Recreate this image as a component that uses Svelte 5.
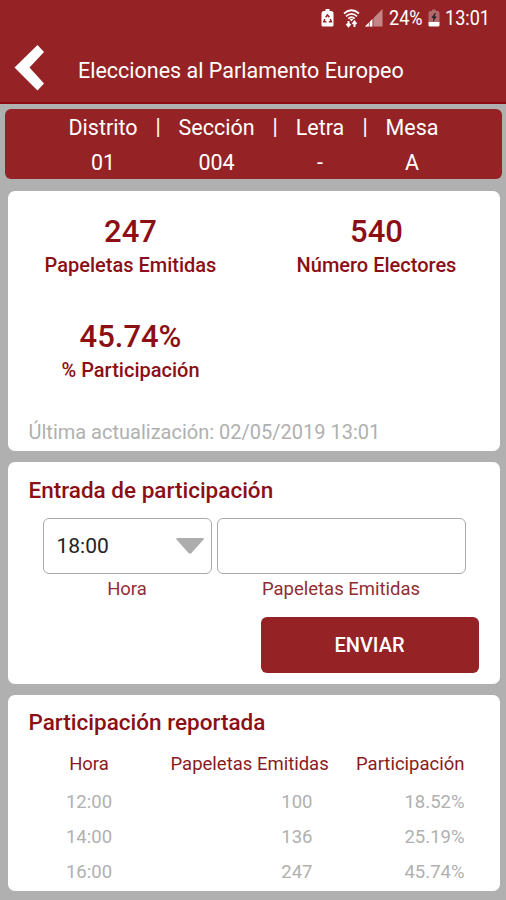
<script>
  const location = [
    { label: 'Distrito', value: '01' },
    { label: 'Sección', value: '004' },
    { label: 'Letra', value: '-' },
    { label: 'Mesa', value: 'A' }
  ];

  const stats = [
    { label: 'Papeletas Emitidas', value: '247' },
    { label: 'Número Electores', value: '540' },
    { label: '% Participación', value: '45.74%' }
  ];

  const reports = [
    { hour: '12:00', ballots: 100, turnout: '18.52%' },
    { hour: '14:00', ballots: 136, turnout: '25.19%' },
    { hour: '16:00', ballots: 247, turnout: '45.74%' }
  ];

  let ballots = $state('');
</script>

<div class="screen">
  <header>
    <div class="status">
      <svg class="recycle" width="13" height="18" viewBox="0 0 13 18">
        <path d="M3 2h1.500V0h4v2H10q2.500 0 2.500 2.500V16q0 1.500-1.500 1.500H2Q.5 17.500.5 16V4.500Q.5 2 3 2z" fill="#fff" />
        <path d="M4.700 8.300 6.500 6l1.800 2.300M9.300 10l1 2.700H7.800M5.400 12.700H2.800L3.900 10" fill="none" stroke="#952326" stroke-width="1.500" />
      </svg>
      <svg class="wifi" width="17" height="19" viewBox="0 0 17 19">
        <path d="M1 4.500q7.500-6.500 15 0M3 7.300q5.500-4.800 11 0M5.300 9.600q3.200-2.800 6.400 0" fill="none" stroke="#fff" stroke-width="1.700" />
        <path d="M8.500 12.500 6.300 9.700h4.400z" fill="#fff" />
        <path d="M5.500 12v5M3.500 14.800l2 2.400 2-2.400M11.500 18v-5M9.500 15l2-2.400 2 2.400" fill="none" stroke="#fff" stroke-width="1.900" />
      </svg>
      <svg class="signal" width="18" height="18" viewBox="0 0 18 18">
        <path d="M17.500 0v17.500H0z" fill="#c58587" />
        <path d="M7.500 10v7.500H0z" fill="#fff" />
        <path d="M4.300 11v7M8 8v10" stroke="#952326" stroke-width=".7" />
      </svg>
      <span class="percent">24%</span>
      <svg class="battery" width="12" height="18" viewBox="0 0 12 18">
        <path d="M2.500 2H4V.5h4V2h1.500Q11.500 2 11.500 4v9H.5V4q0-2 2-2z" fill="#b2686a" />
        <path d="M.5 13h11v3q0 1.500-1.500 1.500H2Q.5 17.500.5 16z" fill="#fff" />
        <path d="M7 4 3.300 9h2.200L4.800 13l4-5.500H6.500L8 4z" fill="#222" />
      </svg>
      <span class="clock">13:01</span>
    </div>
    <div class="title-bar">
      <svg class="back" width="32" height="48" viewBox="0 0 32 48">
        <path d="M23.500 1 30 8 15.500 23.500 30 39.500 23.500 46.500.5 23.500z" fill="#fff" />
      </svg>
      <h1>Elecciones al Parlamento Europeo</h1>
    </div>
  </header>

  <section class="location">
    {#each location as item, i}
      {#if i > 0}<span class="divider">|</span>{/if}
      <div class="place">
        <span>{item.label}</span>
        <span>{item.value}</span>
      </div>
    {/each}
  </section>

  <section class="card summary">
    <div class="stats">
      {#each stats as stat}
        <div class="stat">
          <strong>{stat.value}</strong>
          <span>{stat.label}</span>
        </div>
      {/each}
    </div>
    <p class="updated">Última actualización: 02/05/2019 13:01</p>
  </section>

  <section class="card entry">
    <h2>Entrada de participación</h2>
    <div class="fields">
      <div class="field hour">
        <button class="select" aria-label="Hora">
          <span>18:00</span>
          <svg width="30" height="18" viewBox="0 0 30 18">
            <path d="M2 1h26q1.500 0 .5 1.500L16.500 16q-1.500 1.500-3 0L1.500 2.500Q.5 1 2 1z" fill="#adadad" />
          </svg>
        </button>
        <span class="caption">Hora</span>
      </div>
      <div class="field ballots">
        <input aria-label="Papeletas Emitidas" bind:value={ballots} />
        <span class="caption">Papeletas Emitidas</span>
      </div>
    </div>
    <button class="send">ENVIAR</button>
  </section>

  <section class="card reported">
    <h2>Participación reportada</h2>
    <table>
      <thead>
        <tr><th>Hora</th><th>Papeletas Emitidas</th><th>Participación</th></tr>
      </thead>
      <tbody>
        {#each reports as row}
          <tr><td>{row.hour}</td><td>{row.ballots}</td><td>{row.turnout}</td></tr>
        {/each}
      </tbody>
    </table>
  </section>
</div>

<style>
  :global(body) {
    margin: 0;
    background: #b0b0b0;
  }

  .screen {
    box-sizing: border-box;
    width: 506px;
    height: 900px;
    overflow: hidden;
    background: #b0b0b0;
    font-family: Roboto, 'Liberation Sans', sans-serif;
  }

  header {
    box-sizing: border-box;
    height: 104px;
    background: #952326;
    border-bottom: 2px solid #8a0c10;
    color: #fff;
  }

  .status {
    display: flex;
    align-items: center;
    height: 36px;
    padding-left: 321px;
    font-size: 21px;
    line-height: 36px;
  }

  .status svg {
    flex: none;
  }

  .wifi {
    margin-left: 9px;
  }

  .signal {
    margin-left: 5px;
  }

  .status span {
    transform: scaleX(0.86);
    transform-origin: left;
    white-space: nowrap;
  }

  .percent {
    width: 34px;
    margin-left: 6px;
  }

  .battery {
    margin-left: 5px;
  }

  .clock {
    margin-left: 5px;
  }

  .title-bar {
    display: flex;
    align-items: center;
    padding-left: 14px;
    height: 64px;
  }

  h1 {
    margin: 5px 0 0 32px;
    font-size: 21.5px;
    font-weight: 400;
    white-space: nowrap;
  }

  .location {
    box-sizing: border-box;
    display: grid;
    grid-template-columns: 68px 42px 75px 42px 48px 42px 52px;
    width: 497px;
    height: 70px;
    margin: 5px 0 0 5px;
    padding-left: 64px;
    border-radius: 6px;
    background: #952326;
    color: #fff;
    font-size: 21.5px;
    line-height: 35px;
    text-align: center;
  }

  .place {
    display: flex;
    flex-direction: column;
    align-items: center;
    margin-top: 1px;
    white-space: nowrap;
  }

  .card {
    box-sizing: border-box;
    width: 492px;
    margin-left: 7.5px;
    border-radius: 7px;
    background: #fff;
  }

  .summary {
    height: 260px;
    margin-top: 11.5px;
    padding-top: 22px;
  }

  .stats {
    display: grid;
    grid-template-columns: 1fr 1fr;
    color: #8b0f14;
  }

  .stat {
    display: flex;
    flex-direction: column;
    align-items: center;
    height: 105.500px;
  }

  .stat strong {
    font-size: 31px;
    font-weight: 500;
    line-height: 38px;
  }

  .stat span {
    font-size: 20px;
    font-weight: 500;
    line-height: 28px;
  }

  .updated {
    margin: -6px 0 0 21px;
    color: #b0b0b0;
    font-size: 20px;
    line-height: 28px;
  }

  h2 {
    margin: 0 0 0 21px;
    color: #8b0f14;
    font-size: 22.5px;
    font-weight: 500;
    line-height: 30px;
    white-space: nowrap;
  }

  .entry {
    height: 222.500px;
    margin-top: 11px;
    padding-top: 13px;
  }

  .fields {
    display: flex;
    gap: 5px;
    margin: 13px 0 0 35px;
  }

  .field {
    display: flex;
    flex-direction: column;
    align-items: center;
  }

  .hour {
    width: 169px;
  }

  .ballots {
    width: 249px;
  }

  .select,
  input {
    box-sizing: border-box;
    width: 100%;
    height: 56px;
    border: 1.500px solid #aaa;
    border-radius: 6px;
    background: #fff;
    font: inherit;
  }

  .select {
    display: flex;
    align-items: center;
    justify-content: space-between;
    padding: 0 6px 0 13px;
    color: #222;
    font-size: 21px;
  }

  .caption {
    color: #912e33;
    font-size: 18.5px;
    line-height: 30px;
  }

  .send {
    display: block;
    width: 218px;
    height: 56px;
    margin: 13px 0 0 253px;
    border: 0;
    border-radius: 6px;
    background: #952326;
    color: #fff;
    font: 500 20px Roboto, sans-serif;
  }

  .reported {
    height: 196.500px;
    margin-top: 10.500px;
    padding-top: 12px;
  }

  table {
    width: 457px;
    margin-top: 6px;
    border-collapse: collapse;
    table-layout: fixed;
    font-size: 18.5px;
    text-align: right;
  }

  th,
  td {
    height: 35px;
    padding: 0;
    color: #b0b0b0;
    font-weight: 400;
    white-space: nowrap;
  }

  th {
    height: 42px;
    color: #8b1a1f;
  }

  th:first-child,
  td:first-child {
    width: 163px;
    text-align: center;
  }

  th:nth-child(2) {
    width: 142px;
  }
</style>
